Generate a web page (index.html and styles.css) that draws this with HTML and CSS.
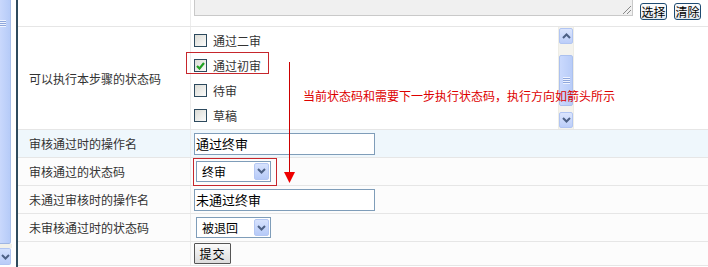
FILE: index.html
```
<!DOCTYPE html>
<html>
<head lang="zh">
    <meta charset="UTF-8">
    <title>审核步骤</title>
    <link rel="stylesheet" href="styles.css">
</head>
<body>
<div class="page">
    <!-- 左侧窗口滚动条 -->
    <div class="vscroll">
        <div class="vthumb"><span class="grip"></span></div>
        <div class="vtrack"></div>
        <div class="vbtn">
            <svg width="9" height="6" viewBox="0 0 9 6"><path d="M1 1l3.5 3.5L8 1" fill="none" stroke="#4d6185" stroke-width="2"/></svg>
        </div>
    </div>

    <div class="form">
        <div class="row">
            <div class="label"></div>
            <div class="value first">
                <div class="memo"><span class="resizer"></span></div>
                <button class="xp">选择</button>
                <button class="xp">清除</button>
            </div>
        </div>

        <div class="row tall">
            <div class="label">可以执行本步骤的状态码</div>
            <div class="value list">
                <div class="items">
                    <div class="item"><span class="chk"></span>通过二审</div>
                    <div class="item"><span class="chk on">
                        <svg width="9" height="8" viewBox="0 0 9 8"><path d="M1 4l2.5 2.5L8 1" fill="none" stroke="#21a121" stroke-width="2.2"/></svg>
                    </span>通过初审</div>
                    <div class="item"><span class="chk"></span>待审</div>
                    <div class="item"><span class="chk"></span>草稿</div>
                </div>
                <div class="sbar">
                    <div class="sbtn">
                        <svg width="9" height="6" viewBox="0 0 9 6"><path d="M1 5l3.5-3.5L8 5" fill="none" stroke="#4d6185" stroke-width="2"/></svg>
                    </div>
                    <div class="sgap"></div>
                    <div class="sthumb"><span class="grip"></span></div>
                    <div class="sgap short"></div>
                    <div class="sbtn">
                        <svg width="9" height="6" viewBox="0 0 9 6"><path d="M1 1l3.5 3.5L8 1" fill="none" stroke="#4d6185" stroke-width="2"/></svg>
                    </div>
                </div>
            </div>
        </div>

        <div class="row hover">
            <div class="label">审核通过时的操作名</div>
            <div class="value"><div class="text-in">通过终审</div></div>
        </div>

        <div class="row">
            <div class="label">审核通过的状态码</div>
            <div class="value">
                <div class="redbox">
                    <div class="combo"><span class="combo-text">终审</span><span class="combo-btn">
                        <svg width="9" height="6" viewBox="0 0 9 6"><path d="M1 1l3.5 3.5L8 1" fill="none" stroke="#4d6185" stroke-width="2"/></svg>
                    </span></div>
                </div>
            </div>
        </div>

        <div class="row">
            <div class="label">未通过审核时的操作名</div>
            <div class="value"><div class="text-in">未通过终审</div></div>
        </div>

        <div class="row">
            <div class="label">未审核通过时的状态码</div>
            <div class="value">
                <div class="combo plain"><span class="combo-text">被退回</span><span class="combo-btn">
                    <svg width="9" height="6" viewBox="0 0 9 6"><path d="M1 1l3.5 3.5L8 1" fill="none" stroke="#4d6185" stroke-width="2"/></svg>
                </span></div>
            </div>
        </div>

        <div class="row last">
            <div class="label"></div>
            <div class="value"><button class="submit">提交</button></div>
        </div>

        <!-- 标注：红框、箭头、说明 -->
        <span class="mark-box"></span>
        <svg class="mark-arrow" width="11" height="122" viewBox="0 0 11 122">
            <path d="M5.5 0V111" stroke="#c00" stroke-width="1"/>
            <path d="M0 110H11L5.5 121Z" fill="#e00"/>
        </svg>
        <div class="mark-note">当前状态码和需要下一步执行状态码，执行方向如箭头所示</div>
    </div>
</div>
</body>
</html>
```

FILE: styles.css
```
* {
    margin: 0;
    padding: 0;
    box-sizing: border-box;
}
body {
    width: 708px;
    height: 267px;
    overflow: hidden;
    background: #fff;
    font-family: "Noto Sans CJK SC", "Liberation Sans", sans-serif;
    font-size: 12px;
    color: #333;
}
.page {
    display: flex;
    height: 267px;
}

/* 左侧滚动条 */
.vscroll {
    width: 18px;
    display: flex;
    flex-direction: column;
    border-right: 2px solid #2f4b5d;
    background: #fff;
}
.vthumb {
    width: 11px;
    height: 244px;
    background: linear-gradient(to right, #c9d8fc, #b6cbf8);
    border-right: 1px solid #a9bfe9;
    border-bottom: 1px solid #9fb5e2;
    border-radius: 0 0 2px 0;
    padding-top: 20px;
}
.vthumb .grip {
    display: block;
    width: 6px;
    height: 7px;
    background: repeating-linear-gradient(to bottom, #eef3ff 0, #eef3ff 1px, #8fa7dc 1px, #8fa7dc 2px);
}
.vtrack {
    width: 12px;
    height: 4px;
    background: #f1f0ea;
}
.vbtn {
    width: 11px;
    height: 17px;
    background: linear-gradient(to bottom, #d3e0fd, #b9ccf8);
    border: 1px solid #b1c5f2;
    border-left: 0;
    border-radius: 0 2px 2px 0;
    display: flex;
    align-items: center;
    justify-content: center;
}

/* 表单 */
.form {
    position: relative;
    flex: 1;
}
.row {
    display: flex;
    height: 28px;
    border-bottom: 1px solid #e6e6e6;
    background: #fcfcfc;
}
.row.tall {
    height: 103px;
    background: #fff;
}
.row:first-child {
    height: 27px;
    background: #fff;
}
.row.hover {
    background: #eff7fc;
}
.row.last {
    height: 24px;
}
.label {
    width: 173px;
    flex: none;
    border-right: 1px solid #ececec;
    padding-left: 11px;
    display: flex;
    align-items: center;
}
.value {
    flex: 1;
    display: flex;
    align-items: center;
    padding-left: 3px;
}

/* 第一行：文本框和按钮 */
.value.first {
    align-items: flex-start;
    overflow: hidden;
}
.memo {
    position: relative;
    width: 439px;
    height: 16px;
    background: #f0f0f0;
    border: 1px solid #c9c9c9;
    border-top: 0;
    margin-right: 7px;
}
.resizer {
    position: absolute;
    right: 1px;
    bottom: 1px;
    width: 8px;
    height: 8px;
    background: linear-gradient(135deg, transparent 45%, #888 45%, #888 52%, transparent 52%, transparent 70%, #888 70%, #888 77%, transparent 77%);
}
.xp {
    margin-top: 3px;
    margin-right: 7px;
    height: 17px;
    width: 27px;
    border: 1px solid #1d4b72;
    border-radius: 3px;
    background: linear-gradient(to bottom, #fdfdfd, #e4e9ee);
    font-family: "Noto Sans CJK SC", sans-serif;
    font-size: 12px;
    line-height: 14px;
    white-space: nowrap;
    color: #000;
    padding: 0;
}

/* 复选列表 */
.value.list {
    align-items: stretch;
    padding-left: 0;
}
.items {
    width: 367px;
    padding: 1px 0 0 3px;
}
.item {
    height: 25px;
    display: flex;
    align-items: center;
    color: #333;
}
.chk {
    width: 13px;
    height: 13px;
    border: 1px solid #2d4a5e;
    background: linear-gradient(135deg, #dcdcd6, #fbfbfa);
    margin-right: 6px;
    display: flex;
    align-items: center;
    justify-content: center;
}
.sbar {
    width: 16px;
    display: flex;
    flex-direction: column;
    padding-top: 1px;
    background: #f4f3ee;
    border-left: 1px solid #eeede6;
    border-right: 1px solid #eeede6;
}
.sbtn {
    height: 16px;
    background: linear-gradient(to bottom, #dbe5fd, #bccef9);
    border: 1px solid #b1c5f2;
    border-radius: 2px;
    display: flex;
    align-items: center;
    justify-content: center;
}
.sgap {
    height: 11px;
}
.sgap.short {
    height: 6px;
}
.sthumb {
    height: 51px;
    background: linear-gradient(to right, #cad9fd, #b8ccf8);
    border: 1px solid #acc1ee;
    border-radius: 2px;
    display: flex;
    align-items: center;
    justify-content: center;
}
.sthumb .grip {
    width: 7px;
    height: 7px;
    background: repeating-linear-gradient(to bottom, #eef3ff 0, #eef3ff 1px, #8fa7dc 1px, #8fa7dc 2px);
}

/* 输入框、下拉框 */
.text-in {
    width: 181px;
    height: 22px;
    border: 1px solid #7f9db9;
    background: #fff;
    color: #000;
    font-size: 13px;
    line-height: 20px;
    padding-left: 1px;
}
.redbox {
    border: 1px solid #c6262c;
    height: 28px;
    width: 84px;
    padding: 2px 0 0 2px;
    margin-left: -1px;
}
.combo {
    width: 75px;
    height: 21px;
    border: 1px solid #7f9db9;
    background: #fff;
    display: flex;
    align-items: center;
    justify-content: space-between;
    padding: 1px;
    color: #000;
}
.combo.plain {
    margin-left: 2px;
}
.combo-text {
    padding-left: 4px;
}
.combo-btn {
    width: 15px;
    height: 17px;
    background: linear-gradient(to bottom, #d7e2fd, #b6caf8);
    border: 1px solid #b4c7f3;
    border-radius: 2px;
    display: flex;
    align-items: center;
    justify-content: center;
}
.submit {
    width: 37px;
    height: 21px;
    border: 1px solid #555;
    border-radius: 1px;
    background: linear-gradient(to bottom, #fbfbfb, #dcdcdc);
    font-family: "Noto Sans CJK SC", sans-serif;
    font-size: 12px;
    letter-spacing: 1px;
    color: #000;
}

/* 标注 */
.mark-box {
    position: absolute;
    left: 168px;
    top: 52px;
    width: 83px;
    height: 22px;
    border: 1px solid #c6262c;
}
.mark-arrow {
    position: absolute;
    left: 266px;
    top: 62px;
}
.mark-note {
    position: absolute;
    left: 285px;
    top: 88px;
    font-size: 12px;
    line-height: 16px;
    color: #d00;
    white-space: nowrap;
}
```
